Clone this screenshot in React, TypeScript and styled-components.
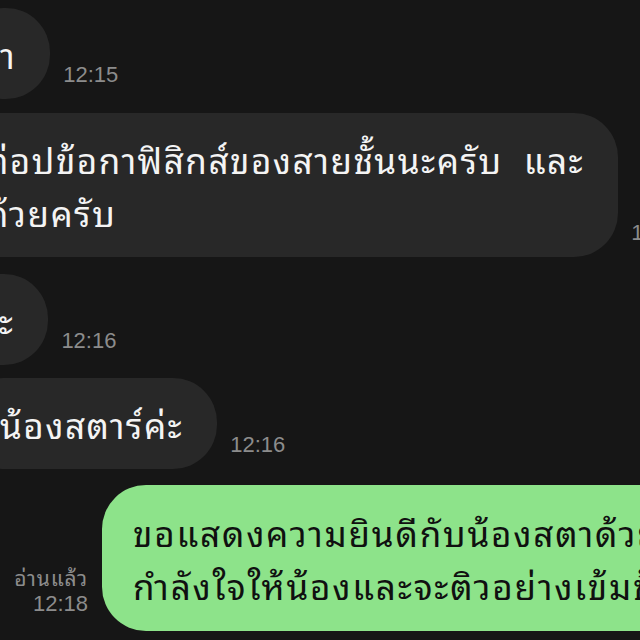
import React from "react";
import styled, { createGlobalStyle } from "styled-components";

const Global = createGlobalStyle`
  html, body { margin: 0; padding: 0; background: #161616; }
  body { width: 640px; height: 640px; overflow: hidden; }
`;

const Screen = styled.div`
  width: 640px;
  height: 640px;
  overflow: hidden;
  background: #161616;
  font-family: "Noto Sans Thai Looped", Loma, Garuda, "Noto Sans Thai", "Noto Sans", sans-serif;
  display: flex;
  flex-direction: column;
  padding-top: 8px;
  box-sizing: border-box;
`;

const Row = styled.div<{ $gap: number }>`
  display: flex;
  align-items: flex-end;
  margin-top: ${(p) => p.$gap}px;
  flex-shrink: 0;
`;

const Bubble = styled.div<{ $cut?: number }>`
  background: #282828;
  color: #f4f4f4;
  border-radius: 44px;
  font-size: 35px;
  letter-spacing: 1.5px;
  line-height: 53px;
  padding: 19px 34px 19px 40px;
  margin-left: ${(p) => -40 - (p.$cut ?? 0)}px;
  white-space: nowrap;
  flex-shrink: 0;
`;

const OutBubble = styled(Bubble)`
  background: #8de38a;
  color: #101010;
  padding: 20px 40px 20px 31px;
  margin-left: 0;
  letter-spacing: 1.8px;
`;

const Time = styled.div`
  color: #8c8c8c;
  font-family: "Liberation Sans", Arial, sans-serif;
  font-size: 22px;
  line-height: 27px;
  margin: 0 13px 11px 13px;
  white-space: nowrap;
  flex-shrink: 0;
`;

const ReadInfo = styled.div`
  width: 88px;
  color: #8c8c8c;
  font-size: 21px;
  letter-spacing: 0.8px;
  line-height: 27px;
  margin: 0 14px 14px 0;
  flex-shrink: 0;
  display: flex;
  flex-direction: column;
  align-items: flex-end;
  white-space: nowrap;
`;

const ReadTime = styled.span`
  font-family: "Liberation Sans", Arial, sans-serif;
  font-size: 22px;
  letter-spacing: 0;
`;

export default function App() {
  return (
    <>
      <Global />
      <Screen>
        <Row $gap={0}>
          <Bubble>า</Bubble>
          <Time>12:15</Time>
        </Row>
        <Row $gap={14}>
          <Bubble $cut={14}>
            ต่อปข้อกาฟิสิกส์ของสายชั้นนะครับ&nbsp;&nbsp;และ
            <br />
            ด้วยครับ
          </Bubble>
          <Time>12:15</Time>
        </Row>
        <Row $gap={17}>
          <Bubble $cut={25}>ค่ะ</Bubble>
          <Time>12:16</Time>
        </Row>
        <Row $gap={13}>
          <Bubble>น้องสตาร์ค่ะ</Bubble>
          <Time>12:16</Time>
        </Row>
        <Row $gap={16}>
          <ReadInfo>
            <span>อ่านแล้ว</span>
            <ReadTime>12:18</ReadTime>
          </ReadInfo>
          <OutBubble>
            ขอแสดงความยินดีกับน้องสตาด้วยนะคะ
            <br />
            กำลังใจให้น้องและจะติวอย่างเข้มข้นค่ะ
          </OutBubble>
        </Row>
      </Screen>
    </>
  );
}
